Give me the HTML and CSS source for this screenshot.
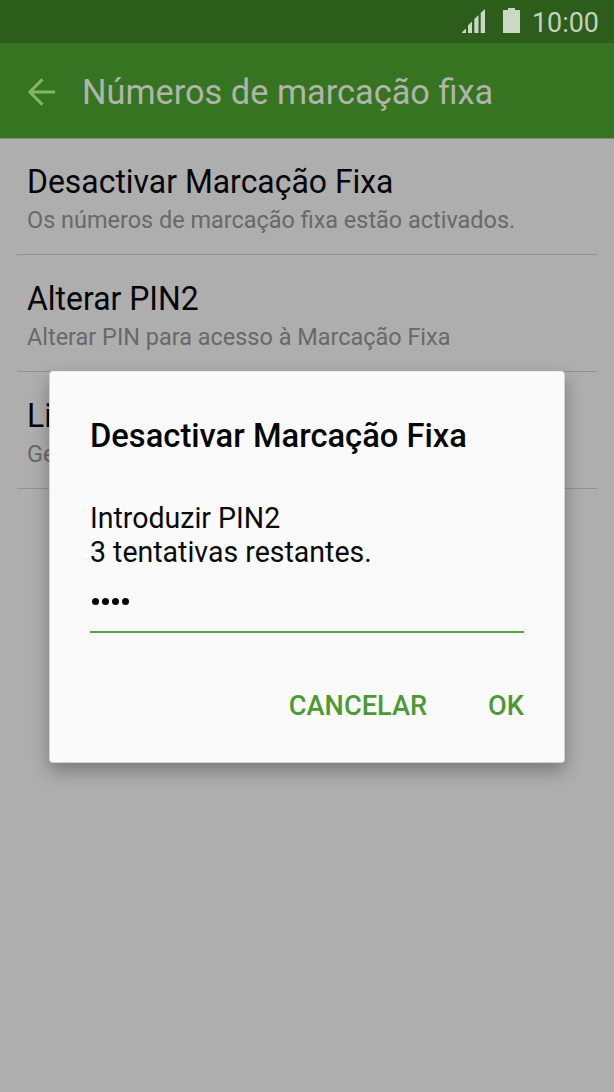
FILE: index.html
```html
<!DOCTYPE html>
<html lang="pt">
<head>
<meta charset="utf-8">
<title>Números de marcação fixa</title>
<link rel="stylesheet" href="styles.css">
</head>
<body>
<div class="phone">
  <div class="status">
    <svg class="signal" width="24" height="24" viewBox="0 0 24 24"><path d="M0 24V23.300L4 19.500V24ZM6 24V16.500L10 12.500V24ZM12.300 24V10L16.500 6V24ZM18.700 24V4L23 0V24Z"/></svg>
    <svg class="battery" width="17" height="25" viewBox="0 0 17 25"><path d="M5 0H12V2H17V25H0V2H5Z"/></svg>
    <span class="clock">10:00</span>
  </div>
  <header class="bar">
    <svg class="back" width="27" height="28" viewBox="0 0 27 28"><path d="M14.500 1.200L1.900 14L14.500 26.800M2 14H27"/></svg>
    <h1 class="heading">Números de marcação fixa</h1>
  </header>
  <main class="list">
    <section class="row">
      <div class="name">Desactivar Marcação Fixa</div>
      <div class="note">Os números de marcação fixa estão activados.</div>
    </section>
    <section class="row">
      <div class="name">Alterar PIN2</div>
      <div class="note">Alterar PIN para acesso à Marcação Fixa</div>
    </section>
    <section class="row">
      <div class="name">Li</div>
      <div class="note">Ge</div>
    </section>
  </main>
  <div class="dialog">
    <h2 class="dialog-title">Desactivar Marcação Fixa</h2>
    <p class="message">Introduzir PIN2<br>3 tentativas restantes.</p>
    <div class="field"><i class="dot"></i><i class="dot"></i><i class="dot"></i><i class="dot"></i></div>
    <div class="actions"><span class="action">CANCELAR</span><span class="action">OK</span></div>
  </div>
</div>
</body>
</html>
```
FILE: styles.css
```css
body { margin: 0; font-family: Roboto, "Liberation Sans", sans-serif; }
.phone { position: relative; width: 614px; height: 1092px; overflow: hidden; background: #aeaeae; }
.status { box-sizing: border-box; height: 43px; display: flex; align-items: flex-start; justify-content: flex-end; padding: 8px 14px 0 0; background: #2c5d1b; color: #c3d2bd; fill: #cbd8c6; }
.signal { margin: 1px 17px 0 0; }
.battery { margin-right: 12px; }
.clock { width: 68px; font-size: 28px; line-height: 29px; transform: scaleX(.96); transform-origin: left; white-space: nowrap; }
.bar { box-sizing: border-box; height: 96px; display: flex; align-items: center; padding: 3px 0 0 28px; background: #377422; border-bottom: 1px solid #7d9575; }
.back { fill: none; stroke: #86b568; stroke-width: 3; }
.heading { margin: 2px 0 0 27px; font-size: 35px; line-height: 40px; font-weight: 400; color: #afb5ab; white-space: nowrap; transform: scaleX(.981); transform-origin: left; }
.list { padding: 0 17px; }
.row { box-sizing: border-box; height: 117px; padding: 25px 0 0 10px; border-bottom: 1px solid #929292; white-space: nowrap; }
.row:first-child { height: 116px; padding-top: 24px; }
.name { font-size: 33px; line-height: 38px; color: #050505; transform: scaleX(.967); transform-origin: left; }
.note { margin-top: 4px; font-size: 24.5px; line-height: 30px; color: #68696a; transform: scaleX(.957); transform-origin: left; }
.dialog { position: absolute; left: 49px; top: 371px; box-sizing: border-box; width: 516px; height: 392px; padding: 45px 40px 0; border-radius: 4px; background: #fafafa; border: 1px solid #d0d0d0; border-top-color: #ececec; box-shadow: 0 8px 18px rgba(0,0,0,.3); }
.dialog-title { margin: 0; font-size: 33px; line-height: 38px; font-weight: 500; color: #050505; white-space: nowrap; transform: scaleX(.991); transform-origin: left; }
.message { margin: 46px 0 0; font-size: 29px; line-height: 34px; color: #0a0a0a; white-space: nowrap; transform: scaleX(.983); transform-origin: left; }
.field { box-sizing: border-box; height: 64px; display: flex; gap: 3px; padding: 29px 0 0 2px; border-bottom: 2px solid #56a03e; }
.dot { width: 7px; height: 7px; border-radius: 50%; background: #050505; }
.actions { display: flex; justify-content: flex-end; gap: 61px; margin-top: 56px; font-size: 27.2px; line-height: 34px; font-weight: 500; color: #4d9935; }
```
